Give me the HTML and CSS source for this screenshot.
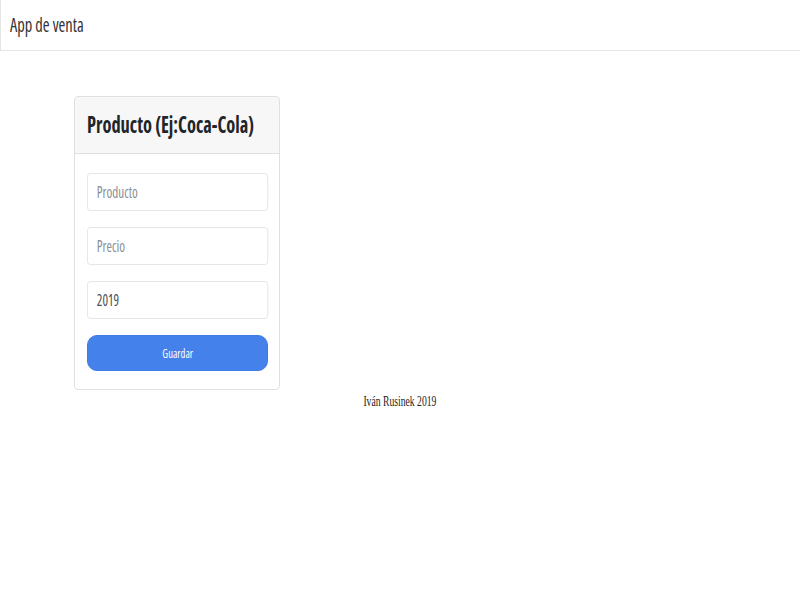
FILE: index.html
```html
<!DOCTYPE html>
<html lang="es">
<head>
<meta charset="utf-8">
<title>App de venta</title>
<link rel="stylesheet" href="styles.css">
</head>
<body>
<nav class="navbar"><span class="brand sq">App de venta</span></nav>
<main class="main">
  <div class="card">
    <div class="card-header">
      <h3 class="card-title"><span class="sq sq-title">Producto (Ej:Coca-Cola)</span></h3>
    </div>
    <form class="card-body">
      <input class="field" type="text" placeholder="Producto">
      <input class="field" type="text" placeholder="Precio">
      <input class="field" type="text" value="2019">
      <button class="btn" type="button"><span class="sq sq-c">Guardar</span></button>
    </form>
  </div>
  <footer class="footer"><span class="sq sq-c sq-foot">Iván Rusinek 2019</span></footer>
</main>
</body>
</html>
```
FILE: styles.css
```css
body {
  margin: 0;
  font-family: "Open Sans", "Liberation Sans", sans-serif;
  font-stretch: 75%;
  color: #212529;
  background: #fff;
}

.sq {
  display: inline-block;
  transform: scaleX(0.82);
  transform-origin: left center;
}
.sq-c { transform-origin: center center; }
.sq-title { transform: scaleX(0.8); }
.sq-foot { transform: scaleX(0.69); }

.navbar {
  height: 50px;
  border-left: 1px solid #e6e6e6;
  border-bottom: 1px solid #e6e6e6;
  display: flex;
  align-items: center;
  padding-left: 9px;
}

.brand {
  font-size: 20px;
  color: #333;
  line-height: 24px;
}

.main {
  padding-top: 45px;
}

.card {
  margin-left: 74px;
  width: 204px;
  border: 1px solid #e0e0e0;
  border-radius: 4px;
  background: #fff;
}

.card-header {
  height: 56px;
  background: #f7f7f7;
  border-bottom: 1px solid #e0e0e0;
  border-radius: 4px 4px 0 0;
  display: flex;
  align-items: center;
  padding-left: 12px;
}

.card-title {
  margin: 0 0 2px;
  font-size: 23px;
  font-weight: 700;
  line-height: 26px;
  color: #212529;
  white-space: nowrap;
}

.card-body {
  display: flex;
  flex-direction: column;
  align-items: flex-start;
  gap: 16px;
  padding: 19px 11px 18px 12px;
  margin: 0;
}

.field {
  box-sizing: border-box;
  width: 220.7px;
  height: 38px;
  margin: 0;
  padding: 0 0 0 11px;
  border: 1px solid #e3e3e3;
  border-radius: 4px;
  font-family: "Open Sans", "Liberation Sans", sans-serif;
  font-stretch: 75%;
  font-size: 16px;
  color: #495057;
  background: #fff;
  outline: none;
  transform: scaleX(0.82);
  transform-origin: left center;
}
.field::placeholder { color: #8a8d91; }

.btn {
  box-sizing: border-box;
  width: 181px;
  height: 36px;
  margin: 0;
  padding: 0;
  border: 1px solid #3f7be6;
  border-radius: 10px;
  background: #4581eb;
  color: #fff;
  font-family: "Open Sans", "Liberation Sans", sans-serif;
  font-stretch: 75%;
  font-size: 13px;
  line-height: 16px;
}

.footer {
  text-align: center;
  font-family: "Liberation Serif", serif;
  font-stretch: normal;
  font-size: 14px;
  line-height: 18px;
  padding-top: 3px;
  color: #222;
}
```
